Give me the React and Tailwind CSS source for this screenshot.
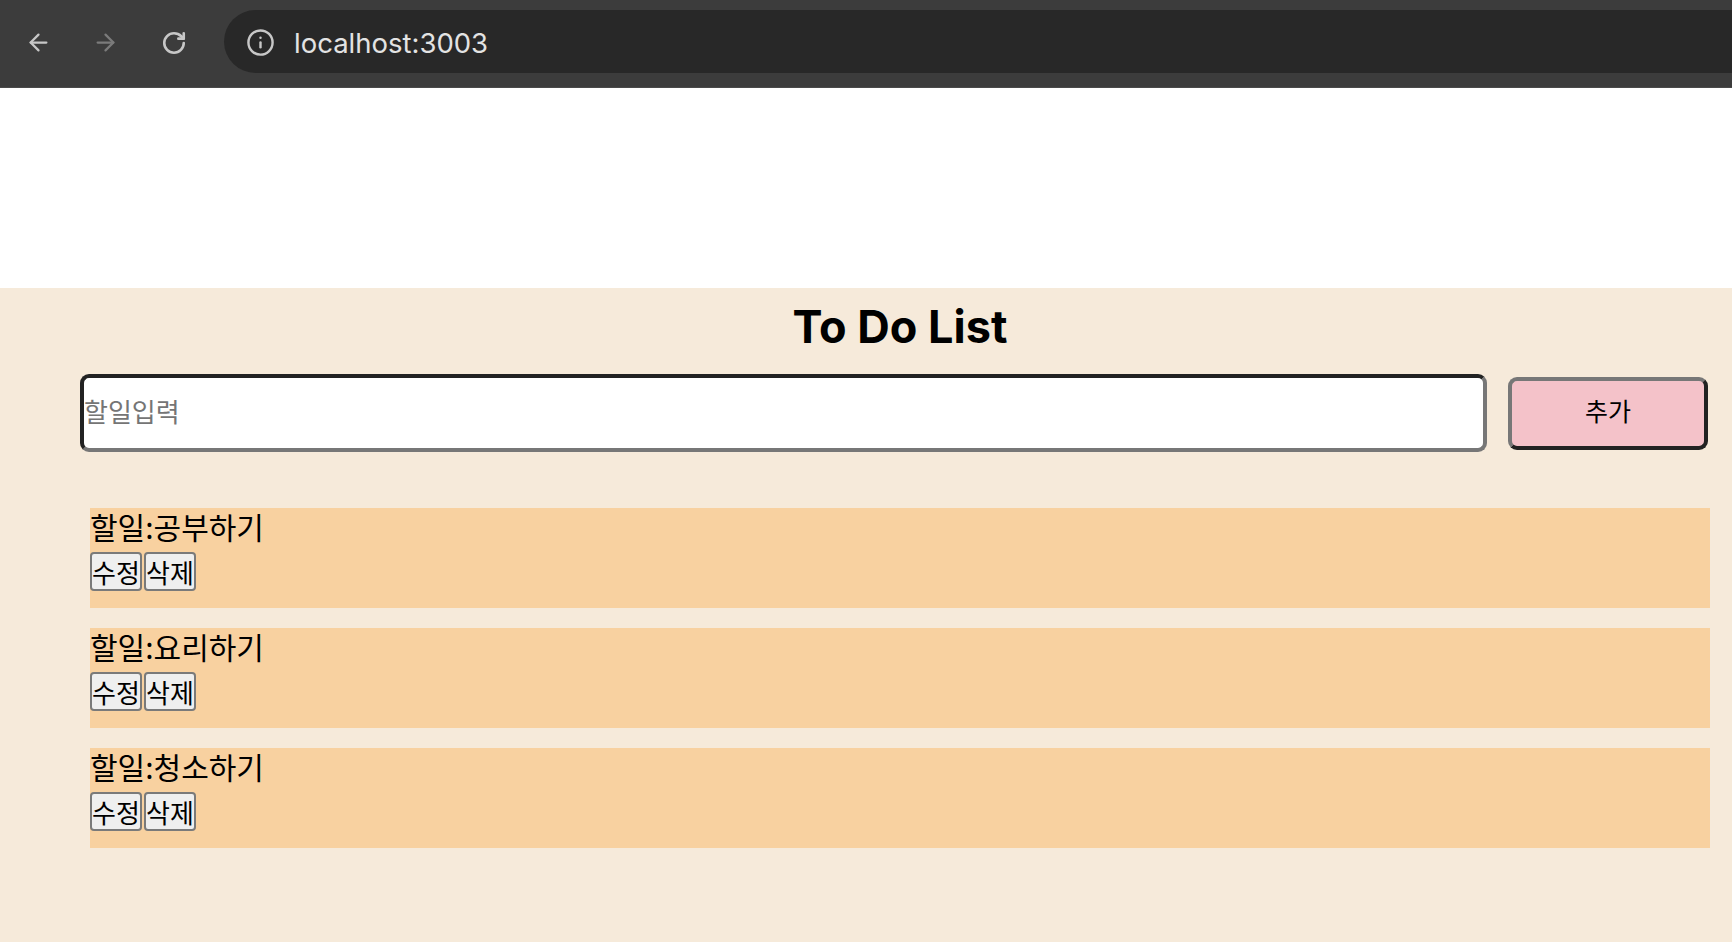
import React, { useState } from "react";
import { ArrowLeft, ArrowRight, RotateCw, Info } from "lucide-react";

const KR = "font-['Noto_Sans_CJK_KR','Noto_Sans',sans-serif]";

const BrowserBar = () => {
  return (
    <div className="h-[88px] shrink-0 bg-[#3c3c3c] border-b border-[#4a4a4a] flex items-start pt-[10px]">
      <div className="flex items-center h-[63px] w-[224px] shrink-0 pt-[2px]">
        <ArrowLeft className="ml-[25px] w-[27px] h-[27px] text-[#c7c7c7]" strokeWidth={2} />
        <ArrowRight className="ml-[40px] w-[27px] h-[27px] text-[#7b7b7b]" strokeWidth={2} />
        <RotateCw className="ml-[42px] w-[26px] h-[26px] text-[#c7c7c7]" strokeWidth={2.4} />
      </div>
      <div className="flex-1 h-[63px] bg-[#282828] rounded-l-full flex items-center">
        <Info className="ml-[22px] mt-[2px] w-[29px] h-[29px] text-[#c7c7c7]" strokeWidth={2} />
        <span className="ml-[19px] mt-[4px] text-[27.5px] text-[#e3e3e3] font-['Inter',sans-serif]">
          localhost:3003
        </span>
      </div>
    </div>
  );
};

const App = () => {
  const [text, setText] = useState("");
  const [todos, setTodos] = useState([
    { id: 1, title: "공부하기" },
    { id: 2, title: "요리하기" },
    { id: 3, title: "청소하기" },
  ]);

  const addTodo = (e) => {
    e.preventDefault();
    if (!text.trim()) return;
    setTodos([...todos, { id: Date.now(), title: text }]);
    setText("");
  };

  return (
    <div className="h-screen flex flex-col bg-white overflow-hidden">
      <BrowserBar />

      {/* white gap above app */}
      <div className="h-[200px] shrink-0 bg-white" />

      <section className="flex-1 bg-[#f6eada]">
        <h1 className="mt-[17px] ml-[90px] mr-[22px] text-center text-[45px] leading-[44px] font-bold text-black font-['Inter',sans-serif]">
          To Do List
        </h1>

        <form className="mt-[25px] ml-[80px] mr-[24px] flex items-center gap-[21px]" onSubmit={addTodo}>
          <input
            type="text"
            value={text}
            onChange={(e) => setText(e.target.value)}
            placeholder="할일입력"
            className={`flex-1 h-[78px] bg-white border-[4px] border-t-[#222] border-l-[#222] border-b-[#777] border-r-[#777] rounded-[9px] px-0 pb-[6px] text-[26px] placeholder:text-[#757575] outline-none ${KR}`}
          />
          <button
            type="submit"
            className={`w-[200px] h-[73px] bg-[#f4c2c9] border-[4px] border-t-[#777] border-l-[#777] border-b-[#222] border-r-[#222] rounded-[9px] pb-[4px] text-[25px] text-black ${KR}`}
          >
            추가
          </button>
        </form>

        <ul className="mt-[56px] ml-[90px] mr-[22px] flex flex-col gap-[20px]">
          {todos.map((todo) => (
            <li key={todo.id} className={`h-[100px] bg-[#f8d1a0] ${KR}`}>
              <div className="h-[44px] text-[30px] leading-[36px] text-black">할일:{todo.title}</div>
              <div className="flex gap-[2px]">
                <button className="w-[52px] h-[39px] bg-[#efefef] border-2 border-[#7a7a7a] rounded-[4px] text-[26px] leading-none text-black">
                  수정
                </button>
                <button
                  className="w-[52px] h-[39px] bg-[#efefef] border-2 border-[#7a7a7a] rounded-[4px] text-[26px] leading-none text-black"
                  onClick={() => setTodos(todos.filter((t) => t.id !== todo.id))}
                >
                  삭제
                </button>
              </div>
            </li>
          ))}
        </ul>
      </section>
    </div>
  );
};

export default App;
